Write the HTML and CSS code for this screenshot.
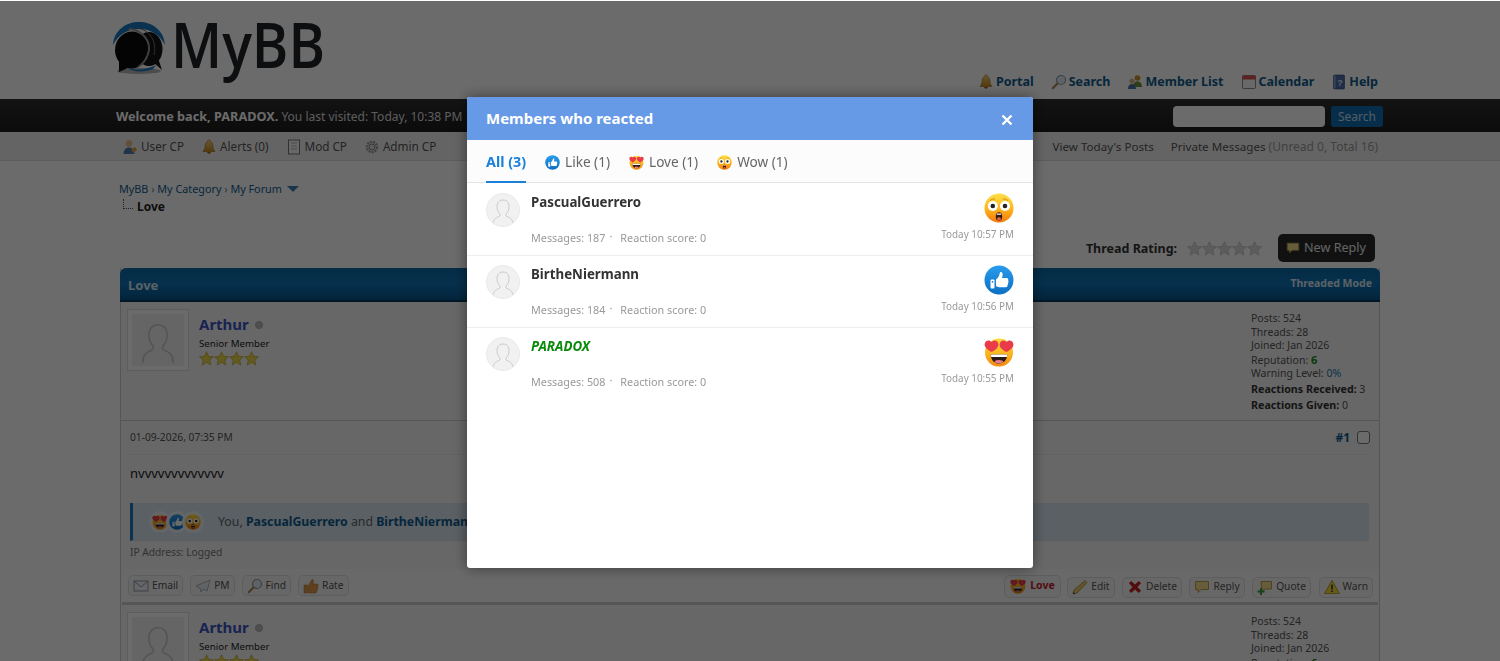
FILE: index.html
```html
<!DOCTYPE html>
<html lang="en">
<head>
<meta charset="utf-8">
<title>Love - MyBB</title>
<link rel="stylesheet" href="styles.css">
</head>
<body>
<svg class="defs" aria-hidden="true">
  <defs>
    <linearGradient id="gFace" x1="0" y1="0" x2="0" y2="1"><stop offset="0" stop-color="#fedc3a"/><stop offset=".55" stop-color="#fbb41f"/><stop offset="1" stop-color="#f28a10"/></linearGradient>
    <linearGradient id="gWow" x1="0" y1="0" x2="0" y2="1"><stop offset="0" stop-color="#fee04a"/><stop offset=".5" stop-color="#fdb81e"/><stop offset="1" stop-color="#f47a0c"/></linearGradient>
    <linearGradient id="gLike" x1="0" y1="0" x2="0" y2="1"><stop offset="0" stop-color="#2a9cec"/><stop offset="1" stop-color="#0b6fc4"/></linearGradient>
    <linearGradient id="gBell" x1="0" y1="0" x2="0" y2="1"><stop offset="0" stop-color="#f3d07a"/><stop offset="1" stop-color="#c98a20"/></linearGradient>
    <symbol id="e-wow" viewBox="0 0 30 30">
      <circle cx="15" cy="15" r="14.5" fill="url(#gWow)"/>
      <path d="M6 7.500q2.500-2 5-1.500M19 6q2.500-.5 5 1.500" stroke="#c9860f" stroke-width=".9" fill="none"/>
      <circle cx="8.800" cy="13" r="5" fill="#fff"/><circle cx="21" cy="13" r="5" fill="#fff"/>
      <circle cx="8.800" cy="13" r="2.300" fill="#222"/><circle cx="21" cy="13" r="2.300" fill="#222"/>
      <ellipse cx="15" cy="23.500" rx="3.200" ry="4.200" fill="#3a1a10"/><ellipse cx="15" cy="25.800" rx="2" ry="1.600" fill="#e8634a"/>
      <path d="M12.800 20.500h4.400v1.200h-4.400z" fill="#fff"/>
    </symbol>
    <symbol id="e-like" viewBox="0 0 30 30">
      <circle cx="15" cy="15" r="14.500" fill="url(#gLike)"/>
      <rect x="6.500" y="14.500" width="4" height="9" rx="1" fill="#fff"/>
      <rect x="7.800" y="16" width="1.400" height="1.600" fill="#1a7fd0"/>
      <path d="M12 14.500c2-1.400 3.200-3.400 3.700-6 .2-1.300 1-1.700 1.900-1.300 1.300.6 1.300 2.800.4 5.800h4.600c1.400 0 2 1.200 1.500 2.200.7.800.6 1.800-.1 2.400.4.900.2 1.800-.5 2.300.2 1.300-.5 2.300-1.800 2.300h-6.200c-1.700 0-2.600-.5-3.500-1.200z" fill="#fff"/>
    </symbol>
    <symbol id="e-love" viewBox="0 0 30 30">
      <circle cx="15" cy="15.500" r="14" fill="url(#gFace)"/>
      <path d="M6.800 17.500h16.400c0 5.500-3.500 9-8.200 9s-8.200-3.500-8.200-9z" fill="#2b1a16"/>
      <path d="M6.900 17.500h16.200l-.2 2.400H7.200z" fill="#fff"/>
      <ellipse cx="15" cy="24.600" rx="4.200" ry="1.700" fill="#e77b8c"/>
      <path d="M7.500 15C3 12.700.4 10.200.6 7.200.8 4.200 3.800 2.700 6.200 3.900c.6.300 1 .7 1.300 1.200.4-.5.800-.9 1.400-1.200C11.300 2.700 14.200 4.200 14.400 7.200c.2 3-2.400 5.500-6.900 7.800z" fill="#ea3b4a"/>
      <path d="M22.500 15C18 12.700 15.400 10.200 15.600 7.200c.2-3 3.200-4.500 5.600-3.300.6.300 1 .7 1.300 1.200.4-.5.800-.9 1.400-1.200 2.400-1.200 5.300.3 5.500 3.300.2 3-2.400 5.500-6.900 7.800z" fill="#ea3b4a"/>
    </symbol>
    <symbol id="i-bell" viewBox="0 0 16 16"><path d="M8 1c1 0 1.500.7 1.500 1.500C11.500 3.500 12 5.500 12 8c0 2 1 3 2 4.500H2C3 11 4 10 4 8c0-2.500.5-4.500 2.500-5.500C6.500 1.700 7 1 8 1z" fill="url(#gBell)" stroke="#9a6a18" stroke-width=".6"/><path d="M6 13h4a2 1.800 0 0 1-4 0z" fill="#9a6a18"/></symbol>
    <symbol id="i-search" viewBox="0 0 16 16"><circle cx="10" cy="6" r="4.500" fill="#e3edf6" stroke="#8c9aa8" stroke-width="1.200"/><path d="M6.700 9.300 1.800 14.200" stroke="#a98a55" stroke-width="2.200" stroke-linecap="round"/></symbol>
    <symbol id="i-users" viewBox="0 0 16 16"><circle cx="10.500" cy="4" r="2.800" fill="#c8912f"/><path d="M6 13c0-3.500 2-5.500 4.500-5.500S15 9.500 15 13z" fill="#6c8f3d"/><circle cx="5" cy="7" r="2.600" fill="#e0b58a"/><path d="M1 15c0-3.300 1.700-5 4-5s4 1.700 4 5z" fill="#4b74a8"/></symbol>
    <symbol id="i-cal" viewBox="0 0 16 16"><rect x="1.500" y="1.500" width="13" height="13" rx="1" fill="#fbfbfb" stroke="#8a8a8a"/><rect x="1.500" y="1.500" width="13" height="4" fill="#d9534f"/></symbol>
    <symbol id="i-help" viewBox="0 0 16 16"><rect x="2.500" y="1" width="11" height="14" rx="1" fill="#4a6fa8" stroke="#2c4a78" stroke-width=".6"/><rect x="3" y="1.500" width="1.500" height="13" fill="#8aa6cf"/><text x="6.200" y="11.500" class="help-q">?</text></symbol>
    <symbol id="i-ucp" viewBox="0 0 16 16"><circle cx="7" cy="4.500" r="3.300" fill="#e6b98c"/><path d="M1.500 15c0-4 2.300-6.500 5.500-6.500s5.500 2.500 5.500 6.500z" fill="#4f7cb5"/><path d="M9 10l4-2 2 3-4 3z" fill="#d8a23a"/></symbol>
    <symbol id="i-mod" viewBox="0 0 16 16"><rect x="2.500" y="1" width="11" height="14" fill="#f7f7f7" stroke="#777"/><path d="M5 4h6M5 7h6M5 10h6" stroke="#bbb"/></symbol>
    <symbol id="i-admin" viewBox="0 0 16 16"><circle cx="8" cy="8" r="5" fill="none" stroke="#9a9a9a" stroke-width="2.500" stroke-dasharray="2 1"/><circle cx="8" cy="8" r="3" fill="#dcdcdc" stroke="#888"/></symbol>
    <symbol id="i-reply" viewBox="0 0 16 16"><path d="M1.500 2.500h13v8H7l-3 3v-3H1.500z" fill="#f6dd8a" stroke="#b89c50"/></symbol>
    <symbol id="i-quote" viewBox="0 0 16 16"><path d="M4 2.500h10.500v7.500H8l-3 2z" fill="#f6dd8a" stroke="#b89c50"/><path d="M3 9v2.500H.5v2H3V16h2v-2.500h2.500v-2H5V9z" fill="#3f9d3f"/></symbol>
    <symbol id="i-warn" viewBox="0 0 16 16"><path d="M8 1.500 15.500 14.500H.5z" fill="#f4d93a" stroke="#a58c20" stroke-width=".8"/><path d="M7.300 5.500h1.400v5H7.300zM7.300 11.500h1.400V13H7.300z" fill="#222"/></symbol>
    <symbol id="i-del" viewBox="0 0 16 16"><path d="M2 4.200 4.200 2 8 5.500 11.800 2 14 4.200 10.500 8 14 11.800 11.800 14 8 10.500 4.200 14 2 11.800 5.500 8z" fill="#c51f1f"/></symbol>
    <symbol id="i-edit" viewBox="0 0 16 16"><path d="M13 1.500 15 3.500 5 14 1 15l1-4z" fill="#eccb5a" stroke="#8b7c3a" stroke-width=".7"/><path d="M1 15l.5-2 1.500 1.500z" fill="#333"/></symbol>
    <symbol id="i-mail" viewBox="0 0 16 16"><rect x="1" y="3" width="14" height="10" fill="#f0f3f7" stroke="#8c99a8"/><path d="M1 3l7 6 7-6" fill="none" stroke="#8c99a8"/></symbol>
    <symbol id="i-pm" viewBox="0 0 16 16"><path d="M15 2 1 8l4 2 1 4 2-3 4 2z" fill="#e8eef5" stroke="#8c99a8" stroke-width=".7"/></symbol>
    <symbol id="i-thumb" viewBox="0 0 16 16"><path d="M1 7h3.500v8H1zM5.500 7.500 9 1.500c1.200 0 1.800 1 1.400 2.500L9.800 6H14c1 0 1.500 1 1 2l-1.300 6c-.2.700-.7 1-1.500 1H5.500z" fill="#e09a4a" stroke="#a8682a" stroke-width=".5"/></symbol>
    <symbol id="i-avatar" viewBox="0 0 34 34"><path d="M7 32c0-5 2-7 6-8.500 1-.4 1.300-1.500.8-2.500-1.800-2-2.800-4.500-2.800-7.500C11 9.500 13.500 7 17 7s6 2.500 6 6.500c0 3-1 5.500-2.800 7.500-.5 1-.2 2.100.8 2.500 4 1.500 6 3.500 6 8.500" fill="none" stroke="#c8c8c8" stroke-width="1"/></symbol>
    <symbol id="i-star" viewBox="0 0 16 16"><path d="M8 .8 10.200 5.700 15.500 6.200 11.500 9.700 12.700 15 8 12.200 3.300 15 4.500 9.700.5 6.200 5.800 5.700z"/></symbol>
  </defs>
</svg>

<div class="page">
  <header class="masthead">
    <div class="wrap masthead-in">
      <a class="logo" href="#">
        <svg class="logo-mark" viewBox="0 0 56 54" aria-hidden="true">
          <ellipse cx="28" cy="50" rx="22" ry="3" fill="#b5b5b5"/>
          <path d="M2 24C3 9 15 1 28 1s25 8 26 23c-5-10-14-16-26-16S7 14 2 24z" fill="#1c7bc0"/>
          <path d="M15 46c8 3.500 20 3.500 30-2l-3 4c-9 4-21 3-27-2z" fill="#1c7bc0"/>
          <ellipse cx="38" cy="28" rx="13.500" ry="17" fill="#141414"/>
          <path d="M42 41 51 49 47 37z" fill="#141414"/>
          <ellipse cx="21" cy="29" rx="17" ry="18.500" fill="#0b0b0b"/>
          <path d="M8 38 8 51 19 46z" fill="#0b0b0b"/>
          <path d="M18 8C32 9 41 21 37 33 35 39 32 43 27 46" fill="none" stroke="#9a9a9a" stroke-width="2"/>
          <path d="M28 7.500C40 10 46 22 43 34" fill="none" stroke="#6e6e6e" stroke-width="1"/>
        </svg>
        <svg class="logo-word" viewBox="0 0 156 70" role="img"><text x="0" y="50" textLength="154" lengthAdjust="spacingAndGlyphs" class="logo-text">MyBB</text></svg>
      </a>
      <ul class="toplinks">
        <li><svg class="ico"><use href="#i-bell"/></svg><a href="#">Portal</a></li>
        <li><svg class="ico"><use href="#i-search"/></svg><a href="#">Search</a></li>
        <li><svg class="ico"><use href="#i-users"/></svg><a href="#">Member List</a></li>
        <li><svg class="ico"><use href="#i-cal"/></svg><a href="#">Calendar</a></li>
        <li><svg class="ico"><use href="#i-help"/></svg><a href="#">Help</a></li>
      </ul>
    </div>
  </header>

  <div class="panel">
    <div class="wrap panel-in">
      <span class="welcome"><b>Welcome back, PARADOX.</b> You last visited: Today, 10:38 PM</span>
      <form class="searchbox">
        <span class="search-input"></span>
        <span class="search-btn">Search</span>
      </form>
    </div>
  </div>

  <nav class="subnav">
    <div class="wrap subnav-in">
      <ul class="sub-left">
        <li><svg class="ico"><use href="#i-ucp"/></svg>User CP</li>
        <li><svg class="ico"><use href="#i-bell"/></svg>Alerts (0)</li>
        <li><svg class="ico"><use href="#i-mod"/></svg>Mod CP</li>
        <li><svg class="ico"><use href="#i-admin"/></svg>Admin CP</li>
      </ul>
      <ul class="sub-right">
        <li>View Today's Posts</li>
        <li>Private Messages <span class="muted">(Unread 0, Total 16)</span></li>
      </ul>
    </div>
  </nav>

  <main class="wrap content">
    <div class="crumbs">
      <div><a href="#">MyBB</a> › <a href="#">My Category</a> › <a href="#">My Forum</a> <span class="crumb-arrow"></span></div>
      <div class="crumb-active"><span class="crumb-tree"></span><b>Love</b></div>
    </div>

    <div class="thread-actions">
      <b class="rating-label">Thread Rating:</b>
      <span class="rating-stars">
        <svg class="star-e"><use href="#i-star"/></svg><svg class="star-e"><use href="#i-star"/></svg><svg class="star-e"><use href="#i-star"/></svg><svg class="star-e"><use href="#i-star"/></svg><svg class="star-e"><use href="#i-star"/></svg>
      </span>
      <a class="new-reply" href="#"><svg class="ico-r"><use href="#i-reply"/></svg>New Reply</a>
    </div>

    <section class="thread">
      <div class="thead"><b>Love</b><b class="thead-mode">Threaded Mode</b></div>

      <article class="post">
        <div class="author">
          <div class="avatar"><svg class="avatar-svg"><use href="#i-avatar"/></svg></div>
          <div class="author-info">
            <div class="author-name"><a href="#">Arthur</a><span class="dot"></span></div>
            <div class="author-title">Senior Member</div>
            <div class="stars"><svg class="star"><use href="#i-star"/></svg><svg class="star"><use href="#i-star"/></svg><svg class="star"><use href="#i-star"/></svg><svg class="star"><use href="#i-star"/></svg></div>
          </div>
          <div class="author-stats">
            <div>Posts: 524</div>
            <div>Threads: 28</div>
            <div>Joined: Jan 2026</div>
            <div>Reputation: <b class="green">6</b></div>
            <div>Warning Level: <a href="#">0%</a></div>
            <div class="stat-gap"><b>Reactions Received:</b> 3</div>
            <div class="stat-gap"><b>Reactions Given:</b> 0</div>
          </div>
        </div>
        <div class="post-head">
          <span>01-09-2026, 07:35 PM</span>
          <span class="post-num"><a href="#">#1</a><span class="check"></span></span>
        </div>
        <div class="post-body">nvvvvvvvvvvvvv</div>
        <div class="reactbar">
          <span class="react-faces">
            <span class="rf"><svg class="rf-svg"><use href="#e-love"/></svg></span>
            <span class="rf"><svg class="rf-svg"><use href="#e-like"/></svg></span>
            <span class="rf"><svg class="rf-svg"><use href="#e-wow"/></svg></span>
          </span>
          <span class="react-text">You, <a href="#">PascualGuerrero</a> and <a href="#">BirtheNiermann</a></span>
        </div>
        <div class="ip">IP Address: Logged</div>
        <div class="post-controls">
          <div class="ctl-group">
            <a class="btn" href="#"><svg class="ico-b"><use href="#i-mail"/></svg>Email</a>
            <a class="btn" href="#"><svg class="ico-b"><use href="#i-pm"/></svg>PM</a>
            <a class="btn" href="#"><svg class="ico-b"><use href="#i-search"/></svg>Find</a>
            <a class="btn" href="#"><svg class="ico-b"><use href="#i-thumb"/></svg>Rate</a>
          </div>
          <div class="ctl-group ctl-right">
            <a class="btn btn-love" href="#"><svg class="ico-l"><use href="#e-love"/></svg>Love</a>
            <a class="btn" href="#"><svg class="ico-b"><use href="#i-edit"/></svg>Edit</a>
            <a class="btn" href="#"><svg class="ico-b"><use href="#i-del"/></svg>Delete</a>
            <a class="btn" href="#"><svg class="ico-b"><use href="#i-reply"/></svg>Reply</a>
            <a class="btn" href="#"><svg class="ico-b"><use href="#i-quote"/></svg>Quote</a>
            <a class="btn" href="#"><svg class="ico-b"><use href="#i-warn"/></svg>Warn</a>
          </div>
        </div>
      </article>

      <article class="post post-next">
        <div class="author">
          <div class="avatar"><svg class="avatar-svg"><use href="#i-avatar"/></svg></div>
          <div class="author-info">
            <div class="author-name"><a href="#">Arthur</a><span class="dot"></span></div>
            <div class="author-title">Senior Member</div>
            <div class="stars"><svg class="star"><use href="#i-star"/></svg><svg class="star"><use href="#i-star"/></svg><svg class="star"><use href="#i-star"/></svg><svg class="star"><use href="#i-star"/></svg></div>
          </div>
          <div class="author-stats">
            <div>Posts: 524</div>
            <div>Threads: 28</div>
            <div>Joined: Jan 2026</div>
            <div>Reputation: <b class="green">6</b></div>
          </div>
        </div>
      </article>
    </section>
  </main>
</div>

<div class="overlay">
  <div class="modal" role="dialog" aria-label="Members who reacted">
    <div class="modal-head"><span>Members who reacted</span><svg class="modal-x" viewBox="0 0 12 12" aria-label="Close"><path d="M1.500 1.500l9 9M10.500 1.500l-9 9" stroke="#fff" stroke-width="2.400"/></svg></div>
    <div class="tabs">
      <a class="tab tab-active" href="#">All (3)</a>
      <a class="tab" href="#"><svg class="tab-ico"><use href="#e-like"/></svg>Like (1)</a>
      <a class="tab" href="#"><svg class="tab-ico"><use href="#e-love"/></svg>Love (1)</a>
      <a class="tab" href="#"><svg class="tab-ico"><use href="#e-wow"/></svg>Wow (1)</a>
    </div>
    <div class="rows">
      <div class="row">
        <div class="row-av"><svg class="row-av-svg"><use href="#i-avatar"/></svg></div>
        <div class="row-main">
          <div class="row-name">PascualGuerrero</div>
          <div class="row-meta"><span>Messages: 187</span><span class="sep">·</span><span>Reaction score: 0</span></div>
        </div>
        <div class="row-side"><svg class="row-emoji"><use href="#e-wow"/></svg><div class="row-time">Today 10:57 PM</div></div>
      </div>
      <div class="row">
        <div class="row-av"><svg class="row-av-svg"><use href="#i-avatar"/></svg></div>
        <div class="row-main">
          <div class="row-name">BirtheNiermann</div>
          <div class="row-meta"><span>Messages: 184</span><span class="sep">·</span><span>Reaction score: 0</span></div>
        </div>
        <div class="row-side"><svg class="row-emoji"><use href="#e-like"/></svg><div class="row-time">Today 10:56 PM</div></div>
      </div>
      <div class="row row-last">
        <div class="row-av"><svg class="row-av-svg"><use href="#i-avatar"/></svg></div>
        <div class="row-main">
          <div class="row-name row-name-mod">PARADOX</div>
          <div class="row-meta"><span>Messages: 508</span><span class="sep">·</span><span>Reaction score: 0</span></div>
        </div>
        <div class="row-side"><svg class="row-emoji"><use href="#e-love"/></svg><div class="row-time">Today 10:55 PM</div></div>
      </div>
    </div>
  </div>
</div>
</body>
</html>
```

FILE: styles.css
```css
* { box-sizing: border-box; }
html, body { margin: 0; padding: 0; height: 661px; overflow: hidden; }
body { background: #fff; color: #333; font: 12px/1.3 "Noto Sans", "DejaVu Sans", sans-serif; }
a { color: #0f5c8e; text-decoration: none; }
ul { list-style: none; margin: 0; padding: 0; }
.defs { display: block; width: 0; height: 0; }
.help-q { font: bold 9px "Liberation Sans", sans-serif; fill: #dfe9f6; }

.wrap { width: 1260px; margin: 0 auto; }
.page { height: 661px; overflow: hidden; background: #fff; }

.masthead { height: 99px; background: #fff; }
.masthead-in { display: flex; justify-content: space-between; align-items: flex-start; height: 99px; }
.logo { display: flex; align-items: flex-start; margin: 18px 0 0 -9px; }
.logo-mark { width: 56px; height: 54px; margin-top: 3px; }
.logo-word { width: 156px; height: 70px; margin-left: 4px; overflow: visible; }
.logo-text { font: 600 64px "Open Sans", sans-serif; fill: #202225; }
.toplinks { display: flex; gap: 17px; margin: 74px 2px 0 0; font-weight: 700; font-size: 12.5px; }
.toplinks li { display: flex; align-items: center; gap: 2px; height: 16px; }
.ico { width: 16px; height: 16px; flex: none; }

.panel { height: 33px; background: linear-gradient(#2e2e2e, #1c1c1c); color: #ddd; }
.panel-in { display: flex; align-items: center; justify-content: space-between; height: 33px; padding-top: 2px; }
.welcome { margin-left: -4px; font-size: 12px; }
.welcome b { color: #fff; font-size: 12.7px; }
.searchbox { display: flex; gap: 6px; margin-right: -3px; }
.search-input { width: 152px; height: 21px; background: #fff; border-radius: 4px; }
.search-btn { display: flex; align-items: center; justify-content: center; width: 52px; height: 21px; background: #0f6fb0; color: #c9dcee; border-radius: 3px; font-size: 12px; }

.subnav { height: 29px; background: #efefef; border-bottom: 1px solid #ddd; color: #555; }
.subnav-in { display: flex; justify-content: space-between; align-items: center; height: 28px; padding-top: 2px; }
.sub-left { display: flex; gap: 17px; margin-left: 2px; font-size: 11.7px; }
.sub-left li { display: flex; align-items: center; gap: 3px; }
.sub-right { display: flex; gap: 17px; margin-right: 2px; font-size: 11.6px; }
.muted { color: #999; font-size: 12px; }

.content { padding-top: 19px; }
.crumbs { margin-left: -1px; font-size: 10.8px; line-height: 18px; color: #777; }
.crumb-arrow { display: inline-block; margin-left: 2px; border: 5px solid transparent; border-top: 6px solid #3a7fb5; border-bottom: 0; vertical-align: 1px; width: 0; height: 0; border-left-width: 6px; border-right-width: 6px; }
.crumb-active { display: flex; align-items: center; color: #222; font-size: 12px; }
.crumb-tree { width: 10px; height: 10px; margin: -6px 4px 0 4px; border-left: 1px dotted #555; border-bottom: 1px dotted #555; }

.thread-actions { display: flex; justify-content: flex-end; align-items: center; height: 28px; margin-top: 18px; padding-right: 5px; }
.rating-label { font-size: 12.5px; color: #333; margin-top: 2px; }
.rating-stars { display: flex; margin: 0 16px 0 10px; }
.star-e { width: 15px; height: 15px; fill: #dcdcdc; stroke: #c9c9c9; }
.new-reply { display: flex; align-items: center; gap: 4px; height: 28px; padding: 0 9px 0 8px; background: #2a2a2a; color: #ededed; font-size: 12.6px; border-radius: 5px; }
.ico-r { width: 14px; height: 14px; }

.thread { margin-top: 6px; border-left: 1px solid #ccc; border-right: 1px solid #ccc; }
.thead { display: flex; justify-content: space-between; align-items: center; height: 34px; padding: 3px 8px 0; margin: 0 -1px; background: linear-gradient(#0b6aa8, #0f72b6 50%, #0a5f9c 85%, #085488); border-radius: 6px 6px 0 0; border-bottom: 2px solid #03385e; color: #d8e8f3; font-size: 13px; }
.thead-mode { font-size: 10.5px; margin-top: -4px; }

.post { background: #f5f5f5; }
.author { display: flex; align-items: flex-start; height: 119px; padding: 7px 6px 0; background: #f5f5f5; border-bottom: 1px solid #ccc; }
.avatar { flex: none; width: 62px; height: 62px; padding: 4px; background: #fff; border: 1px solid #ddd; }
.avatar-svg { display: block; width: 52px; height: 52px; background: #f0f0f0; }
.author-info { margin-left: 10px; flex: 1; }
.author-name { display: flex; align-items: center; font-size: 15px; line-height: 22px; font-weight: 700; margin-top: 4px; }
.author-name a { color: #3d54c4; }
.dot { width: 8px; height: 8px; margin-left: 6px; border-radius: 50%; background: #bbb; border: 1px solid #aaa; margin-top: 2px; }
.author-title { font-size: 9.7px; line-height: 14px; color: #222; margin-top: 2px; }
.stars { display: flex; height: 15px; }
.star { width: 15px; height: 15px; fill: #ecd64a; stroke: #b09a20; stroke-width: .6; }
.author-stats { width: 122px; flex: none; font-size: 10.5px; line-height: 13.5px; color: #555; margin-top: 3px; }
.author-stats a { color: #2a7ab5; }
.green { color: #1b8a1b; font-size: 11px; }
.stat-gap { margin-top: 2.500px; }
.stat-gap b { color: #333; font-size: 10.7px; }

.post-head { display: flex; justify-content: space-between; align-items: center; height: 34px; margin: 0 9px; border-bottom: 1px dotted #ddd; font-size: 10.2px; color: #555; }
.post-num { display: flex; align-items: center; gap: 7px; font-size: 12px; font-weight: 700; }
.check { width: 13px; height: 13px; border: 1px solid #777; border-radius: 3px; background: #fff; }
.post-body { padding: 10px 9px 0; height: 48px; font-size: 13px; color: #222; }
.reactbar { display: flex; align-items: center; height: 38px; margin: 0 10px 0 9px; padding-left: 16px; background: #d6e4ef; border-left: 3px solid #1d7ac6; border-bottom: 1px solid #ddd; font-size: 12.3px; color: #666; }
.react-faces { display: flex; margin-right: 14px; }
.rf { display: flex; align-items: center; justify-content: center; width: 22px; height: 22px; margin-right: -5.500px; background: #eef0f2; border-radius: 50%; }
.rf:last-child { margin-right: 0; }
.rf-svg { width: 16px; height: 16px; }
.react-text a { color: #0f5c8e; font-weight: 700; }
.ip { height: 28px; padding: 5px 9px 0; font-size: 10.2px; color: #777; }
.post-controls { display: flex; justify-content: space-between; align-items: center; height: 36px; padding: 0 5px 0 6px; background: #f9f9f9; border-bottom: 3px solid #ccc; margin: 0 1px; }
.ctl-group { display: flex; gap: 7px; }
.ctl-right { margin-top: 3px; gap: 7.500px; }
.btn { display: flex; align-items: center; gap: 3px; height: 21px; padding: 0 4px; background: #f5f5f5; border: 1px solid #ddd; border-radius: 5px; color: #555; font-size: 10.2px; }
.btn-love { color: #c01c2c; font-weight: 700; margin: -2px -1px 0 0; height: 23px; gap: 4px; padding: 0 5px; font-size: 10.5px; }
.ico-b { width: 16px; height: 16px; }
.ico-l { width: 16px; height: 16px; }
.post-next .author { height: 120px; border: 0; }

/* modal layer */
.overlay { position: fixed; inset: 1px 0 0 0; background: rgba(0, 0, 0, .58); }
.modal { position: absolute; left: 467px; top: 96px; width: 566px; height: 471px; background: #fff; border-radius: 3px; overflow: hidden; box-shadow: 0 0 14px rgba(0, 0, 0, .45); }
.modal-head { display: flex; justify-content: space-between; align-items: center; height: 43px; padding: 0 20px 0 19px; background: #6699e6; color: #fff; font-size: 15px; font-weight: 700; }
.modal-x { width: 12px; height: 12px; margin-top: 3px; }
.tabs { display: flex; gap: 19px; height: 43px; padding-left: 19px; background: #fcfcfc; border-bottom: 1px solid #e4e4e4; font-size: 13.6px; }
.tab { display: flex; align-items: center; gap: 5px; height: 43px; padding-top: 3px; color: #666; border-bottom: 2px solid transparent; }
.tab-active { color: #1a80d9; font-weight: 700; border-bottom-color: #1a80d9; font-size: 14.300px; }
.tab-ico { width: 15px; height: 15px; }
.rows { padding-top: 1px; }
.row { display: flex; align-items: flex-start; height: 72px; padding: 9px 19px; border-bottom: 1px solid #eceff2; }
.row-last { border-bottom: 0; }
.row-av { flex: none; width: 34px; height: 34px; border-radius: 50%; background: #f1f1f1; border: 1px solid #e9e9e9; overflow: hidden; }
.row-av-svg { display: block; width: 34px; height: 34px; margin: -1px; }
.row-main { flex: 1; margin-left: 11px; }
.row-name { font-size: 13.3px; font-weight: 700; color: #333; line-height: 18px; }
.row-name-mod { color: #0a8a0a; font-style: italic; }
.row-meta { display: flex; margin-top: 19px; font-size: 10.8px; line-height: 15px; color: #999; }
.sep { margin: -2px 8px 0 4px; }
.row-side { display: flex; flex-direction: column; align-items: flex-end; }
.row-emoji { width: 30px; height: 30px; }
.row-time { margin-top: 4px; font-size: 9.900px; line-height: 14px; color: #999; }
```
